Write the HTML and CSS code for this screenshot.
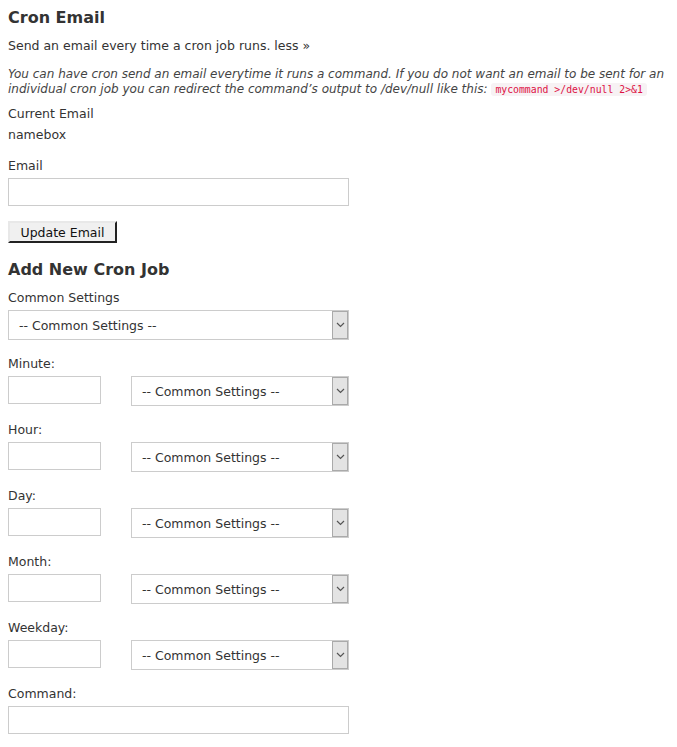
FILE: index.html
```html
<!DOCTYPE html>
<html>
<head>
<meta charset="utf-8">
<link rel="stylesheet" href="styles.css">
</head>
<body>
<div class="page">
  <h2 class="title">Cron Email</h2>
  <p class="lead">Send an email every time a cron job runs. <a class="less">less »</a></p>
  <p class="note">You can have cron send an email everytime it runs a command. If you do not want an email to be sent for an individual cron job you can redirect the command’s output to /dev/null like this: <code>mycommand &gt;/dev/null 2&gt;&amp;1</code></p>
  <div class="label">Current Email</div>
  <div class="value">namebox</div>
  <div class="label field-label">Email</div>
  <div class="input wide"></div>
  <button class="btn">Update Email</button>

  <h2 class="title title2">Add New Cron Job</h2>
  <div class="label first-label">Common Settings</div>
  <div class="select wide"><span class="sel-text">-- Common Settings --</span><span class="arrow"><svg width="9" height="6" viewBox="0 0 9 6"><path d="M1 1 L4.5 4.5 L8 1" fill="none" stroke="#555" stroke-width="1.2"/></svg></span></div>

  <div class="group">
    <div class="label">Minute:</div>
    <div class="row"><div class="input small"></div><div class="select mid"><span class="sel-text">-- Common Settings --</span><span class="arrow"><svg width="9" height="6" viewBox="0 0 9 6"><path d="M1 1 L4.5 4.5 L8 1" fill="none" stroke="#555" stroke-width="1.2"/></svg></span></div></div>
  </div>
  <div class="group">
    <div class="label">Hour:</div>
    <div class="row"><div class="input small"></div><div class="select mid"><span class="sel-text">-- Common Settings --</span><span class="arrow"><svg width="9" height="6" viewBox="0 0 9 6"><path d="M1 1 L4.5 4.5 L8 1" fill="none" stroke="#555" stroke-width="1.2"/></svg></span></div></div>
  </div>
  <div class="group">
    <div class="label">Day:</div>
    <div class="row"><div class="input small"></div><div class="select mid"><span class="sel-text">-- Common Settings --</span><span class="arrow"><svg width="9" height="6" viewBox="0 0 9 6"><path d="M1 1 L4.5 4.5 L8 1" fill="none" stroke="#555" stroke-width="1.2"/></svg></span></div></div>
  </div>
  <div class="group">
    <div class="label">Month:</div>
    <div class="row"><div class="input small"></div><div class="select mid"><span class="sel-text">-- Common Settings --</span><span class="arrow"><svg width="9" height="6" viewBox="0 0 9 6"><path d="M1 1 L4.5 4.5 L8 1" fill="none" stroke="#555" stroke-width="1.2"/></svg></span></div></div>
  </div>
  <div class="group">
    <div class="label">Weekday:</div>
    <div class="row"><div class="input small"></div><div class="select mid"><span class="sel-text">-- Common Settings --</span><span class="arrow"><svg width="9" height="6" viewBox="0 0 9 6"><path d="M1 1 L4.5 4.5 L8 1" fill="none" stroke="#555" stroke-width="1.2"/></svg></span></div></div>
  </div>
  <div class="group">
    <div class="label">Command:</div>
    <div class="input wide"></div>
  </div>
</div>
</body>
</html>
```
FILE: styles.css
```css
html, body { margin: 0; padding: 0; background: #fff; }
body { font-family: "DejaVu Sans", Verdana, sans-serif; font-size: 12.5px; color: #333; }
.page { padding: 8px 8px 0 8px; }
.title { margin: 0; font-size: 16px; font-weight: bold; line-height: 19px; color: #333; }
.lead { margin: 11px 0 0 0; line-height: 16px; }
.less { color: #333; text-decoration: none; }
.note { margin: 13px 0 0 0; font-style: italic; font-size: 12px; line-height: 15px; color: #444; }
.note code { font-family: "DejaVu Sans Mono", monospace; font-style: normal; font-size: 9.8px; line-height: 12px; color: #d14; background: #f7f2f4; padding: 1px 4px; border-radius: 3px; }
.label { line-height: 16px; }
.note + .label { margin-top: 9px; }
.value { margin-top: 5px; line-height: 16px; }
.field-label { margin-top: 15px; }
.input { box-sizing: border-box; height: 28px; border: 1px solid #ccc; background: #fff; margin-top: 4px; }
.wide { width: 341px; }
.small { width: 93px; margin-top: 0; }
.btn { display: block; margin-top: 15px; box-sizing: border-box; width: 109px; height: 22px; font-family: "DejaVu Sans", Verdana, sans-serif; font-size: 12.5px; color: #111; background: #f0f0f0; border: 2px solid; border-color: #e8e8e8 #222 #222 #e8e8e8; padding: 0; }
.title2 { margin-top: 17px; }
.first-label { margin-top: 11px; }
.select { box-sizing: border-box; height: 30px; border: 1px solid #ccc; display: flex; align-items: center; justify-content: space-between; margin-top: 4px; background: #fff; }
.sel-text { padding-left: 10px; color: #333; }
.arrow { width: 16px; height: 28px; box-sizing: border-box; background: #e3e3e3; border: 1px solid #aaa; display: flex; align-items: center; justify-content: center; }
.group { margin-top: 16px; }
.row { display: flex; gap: 30px; margin-top: 4px; align-items: flex-start; }
.mid { width: 218px; margin-top: 0; }
```
